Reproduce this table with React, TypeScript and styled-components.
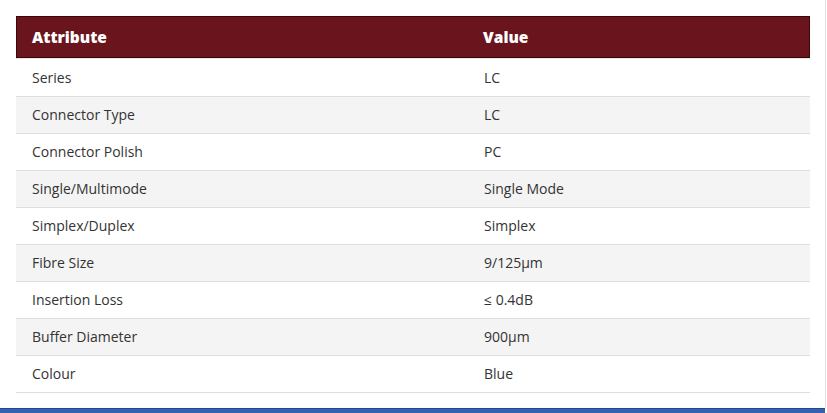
import styled, { createGlobalStyle } from "styled-components";

const GlobalStyle = createGlobalStyle`
  html, body {
    margin: 0;
    padding: 0;
    background: #ffffff;
  }
  body {
    font-family: 'Open Sans', 'Noto Sans', sans-serif;
    color: #333333;
  }
`;

const Page = styled.div`
  width: 827px;
  height: 413px;
  display: flex;
  flex-direction: column;
  overflow: hidden;
`;

const Main = styled.div`
  flex: 1;
  display: flex;
  align-items: flex-start;
  padding: 16px 15px 0 16px;
  border-right: 1px solid #e2e2e2;
  margin-right: 1px;
`;

const Table = styled.table`
  width: 794px;
  flex: none;
  border-collapse: separate;
  border-spacing: 0;
  table-layout: fixed;
  font-size: 14px;
`;

const HeadCell = styled.th`
  box-sizing: border-box;
  background: #6a141e;
  color: #ffffff;
  font-weight: 800;
  font-size: 15.5px;
  text-align: left;
  height: 42px;
  padding: 0 16px 0 15px;
  border-top: 1px solid #3a070c;
  border-bottom: 1px solid #3a070c;
  &:first-child {
    width: 452px;
    padding-left: 15px;
    border-left: 1px solid #3a070c;
  }
  &:last-child {
    border-right: 1px solid #3a070c;
  }
`;

const Row = styled.tr<{ $shaded: boolean }>`
  background: ${({ $shaded }) => ($shaded ? "#f4f4f4" : "#ffffff")};
`;

const Cell = styled.td<{ $first: boolean }>`
  box-sizing: border-box;
  height: ${({ $first }) => ($first ? "39px" : "37px")};
  padding: 0 16px 1px;
  color: #333333;
  vertical-align: middle;
  border-top: ${({ $first }) => ($first ? "1px solid #e4e4e4" : "none")};
  border-bottom: 1px solid #dedede;
`;

const Footer = styled.div`
  height: 4px;
  background: #3560ad;
  border-top: 1px solid #244889;
  margin-right: 2px;
`;

const rows: [string, string][] = [
  ["Series", "LC"],
  ["Connector Type", "LC"],
  ["Connector Polish", "PC"],
  ["Single/Multimode", "Single Mode"],
  ["Simplex/Duplex", "Simplex"],
  ["Fibre Size", "9/125µm"],
  ["Insertion Loss", "≤ 0.4dB"],
  ["Buffer Diameter", "900µm"],
  ["Colour", "Blue"],
];

export default function App() {
  return (
    <>
      <GlobalStyle />
      <Page>
        <Main>
          <Table>
            <thead>
              <tr>
                <HeadCell>Attribute</HeadCell>
                <HeadCell>Value</HeadCell>
              </tr>
            </thead>
            <tbody>
              {rows.map(([name, value], i) => (
                <Row key={name} $shaded={i % 2 === 1}>
                  <Cell $first={i === 0}>{name}</Cell>
                  <Cell $first={i === 0}>{value}</Cell>
                </Row>
              ))}
            </tbody>
          </Table>
        </Main>
        <Footer />
      </Page>
    </>
  );
}
